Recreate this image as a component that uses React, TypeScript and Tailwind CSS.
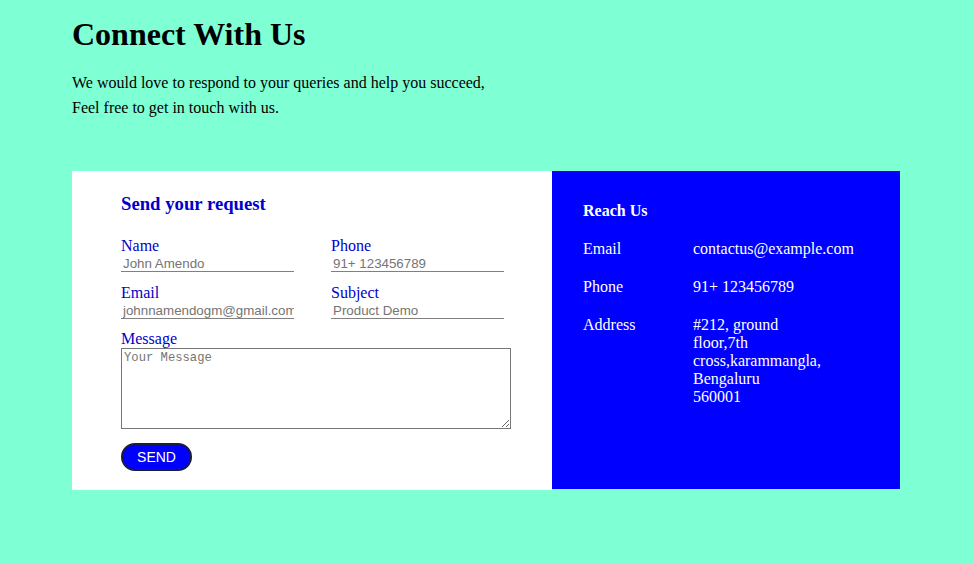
import React from 'react';

const serif = { fontFamily: '"Liberation Serif", "Times New Roman", serif' };

const Field = ({ label, placeholder, type = 'text' }: { label: string; placeholder: string; type?: string }) => (
  <div className="flex flex-col">
    <label className="text-[16px] leading-[18px] text-[#0000cd]">{label}</label>
    <input
      type={type}
      placeholder={placeholder}
      className="w-[173px] h-[17px] border-b border-[#808080] bg-transparent pl-[2px] text-[13.33px] leading-[16px] outline-none placeholder:text-[#757575]"
      style={{ fontFamily: '"Liberation Sans", Arial, sans-serif' }}
    />
  </div>
);

const Row = ({ label, children }: { label: string; children: React.ReactNode }) => (
  <div className="flex">
    <div className="w-[110px]">{label}</div>
    <div>{children}</div>
  </div>
);

const App = () => {
  return (
    <div className="min-h-[564px] w-full bg-[#7fffd4] pl-[72px] pt-[16px] text-black" style={serif}>
      <h1 className="text-[32px] leading-[37px] font-bold">Connect With Us</h1>
      <p className="mt-[17px] text-[16px] leading-[25px]">
        We would love to respond to your queries and help you succeed,
        <br />
        Feel free to get in touch with us.
      </p>

      <div className="mt-[51px] flex w-[828px] items-start">
        <div className="h-[319px] w-[480px] bg-white pl-[49px] pt-[22px]">
          <h2 className="text-[18.72px] leading-[21px] font-bold text-[#0000cd]">Send your request</h2>
          <form className="mt-[23px]" onSubmit={(e) => e.preventDefault()}>
            <div className="grid grid-cols-[173px_173px] gap-x-[37px] gap-y-[12px]">
              <Field label="Name" placeholder="John Amendo" />
              <Field label="Phone" placeholder="91+ 123456789" />
              <Field label="Email" placeholder="johnnamendogm@gmail.com" type="email" />
              <Field label="Subject" placeholder="Product Demo" />
            </div>
            <div className="mt-[10px] flex flex-col">
              <label className="text-[16px] leading-[19px] text-[#0000cd]">Message</label>
              <textarea
                placeholder="Your Message"
                className="h-[81px] w-[390px] border border-[#767676] p-[2px] text-[12.2px] leading-[15px] outline-none placeholder:text-[#757575]"
                style={{ fontFamily: '"Liberation Mono", "DejaVu Sans Mono", monospace' }}
              />
            </div>
            <button
              type="submit"
              className="mt-[14px] h-[28px] w-[71px] rounded-full border-2 border-[#1c1c3c] bg-[#0000ff] text-[14px] text-white"
              style={{ fontFamily: '"Liberation Sans", Arial, sans-serif' }}
            >
              SEND
            </button>
          </form>
        </div>

        <div className="h-[318px] w-[348px] bg-[#0000ff] pl-[31px] pt-[31px] text-[16px] leading-[18px] text-white">
          <div className="flex flex-col gap-[20px]">
            <div className="font-bold">Reach Us</div>
            <Row label="Email">
              <span className="whitespace-nowrap">contactus@example.com</span>
            </Row>
            <Row label="Phone">91+ 123456789</Row>
            <Row label="Address">
              <div className="w-[136px]">
                #212, ground floor,7th cross,karammangla, Bengaluru
                <br />
                560001
              </div>
            </Row>
          </div>
        </div>
      </div>
    </div>
  );
};

export default App;
